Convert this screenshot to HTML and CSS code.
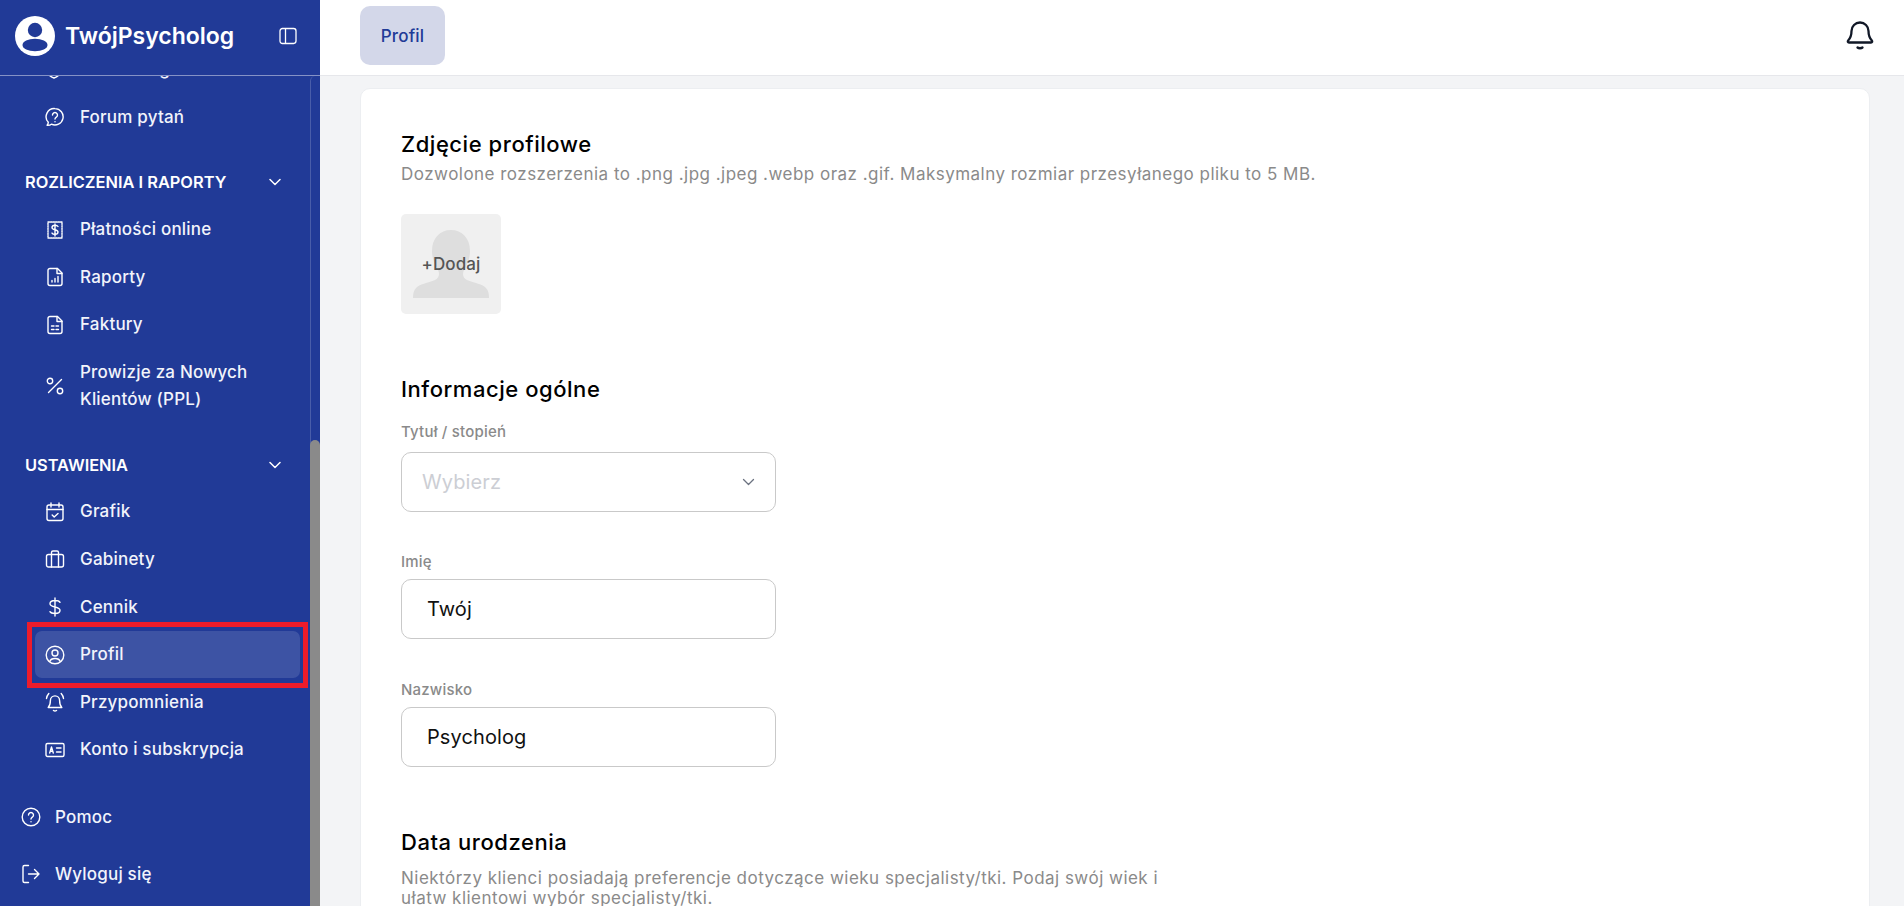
FILE: index.html
```html
<!DOCTYPE html>
<html lang="pl">
<head>
<meta charset="utf-8">
<title>TwójPsycholog – Profil</title>
<link rel="stylesheet" href="styles.css">
</head>
<body>
<div class="app">
  <aside class="sidebar">
    <div class="brand">
      <svg class="brand-logo" viewBox="0 0 40 40"><circle cx="20" cy="20" r="20" fill="#fff"/><circle cx="20" cy="14" r="7.2" fill="#213a97"/><ellipse cx="20" cy="29" rx="12.5" ry="6.2" fill="#213a97"/></svg>
      <span class="brand-name">TwójPsycholog</span>
      <svg class="brand-toggle" viewBox="0 0 18 18"><rect x="1" y="1.5" width="16" height="15" rx="2.4"/><path d="M6.5 1.5v15"/></svg>
    </div>
    <div class="sidebar-body">
      <div class="nav-scroll">
        <ul class="nav-list nav-list-top">
          <li class="nav-item"><svg class="ico" viewBox="0 0 20 20"><path d="M9 1l7 3v6c0 4-3 6.500-7 8-4-1.500-7-4-7-8V4z"/></svg><span>Monitoring</span></li>
          <li class="nav-item"><svg class="ico" viewBox="0 0 20 20"><path d="M10 1.600a8.200 8.200 0 1 1-3.600 15.600c-1 .9-2.600 1.200-4.300 1.100.8-.9 1.200-1.900 1.200-3A8.200 8.200 0 0 1 10 1.600z"/><path d="M7.500 8a2.500 2.500 0 1 1 3.800 2.100c-.8.500-1.300 1-1.300 1.900"/><path d="M10 14.600v.1"/></svg><span>Forum pytań</span></li>
        </ul>
        <div class="nav-section"><span>ROZLICZENIA I RAPORTY</span><svg class="chev" viewBox="0 0 12 8"><path d="M1 1.500l5 5 5-5"/></svg></div>
        <ul class="nav-list">
          <li class="nav-item"><svg class="ico" viewBox="0 0 20 20"><path d="M3 2h14v16H3z" stroke-dasharray="1.500 1"/><path d="M13 6.500c-.5-.8-1.500-1.200-3-1.200-1.700 0-3 .7-3 2.200 0 3 6 1.600 6 4.600 0 1.500-1.300 2.200-3 2.200-1.500 0-2.500-.4-3-1.200M10 4v12"/></svg><span>Płatności online</span></li>
          <li class="nav-item"><svg class="ico" viewBox="0 0 20 20"><path d="M12.500 1.500H5a2 2 0 0 0-2 2v13a2 2 0 0 0 2 2h10a2 2 0 0 0 2-2V6z"/><path d="M12 1.500V6.500h5M7 15v-1.500M10 15v-3.500M13 15V9.500"/></svg><span>Raporty</span></li>
          <li class="nav-item"><svg class="ico" viewBox="0 0 20 20"><path d="M12.500 1.500H5a2 2 0 0 0-2 2v13a2 2 0 0 0 2 2h10a2 2 0 0 0 2-2V6z"/><path d="M12 1.500V6.500h5M6.500 11h2.500M11 11h2.500M6.500 14.500h2.500M11 14.500h2.500"/></svg><span>Faktury</span></li>
          <li class="nav-item nav-item-tall"><svg class="ico" viewBox="0 0 20 20"><path d="M16.500 3.500l-13 13"/><circle cx="5" cy="5" r="2.700"/><circle cx="15" cy="15" r="2.700"/></svg><span>Prowizje za Nowych Klientów (PPL)</span></li>
        </ul>
        <div class="nav-section nav-section-second"><span>USTAWIENIA</span><svg class="chev" viewBox="0 0 12 8"><path d="M1 1.500l5 5 5-5"/></svg></div>
        <ul class="nav-list">
          <li class="nav-item"><svg class="ico" viewBox="0 0 20 20"><rect x="2" y="3" width="16" height="15.500" rx="2"/><path d="M2 7.500h16M6 1v4M14 1v4M7.200 13l2 2 3.800-3.500"/></svg><span>Grafik</span></li>
          <li class="nav-item"><svg class="ico" viewBox="0 0 20 20"><rect x="1.500" y="5.500" width="17" height="12.500" rx="2"/><path d="M6.500 5.500V3.500a1.500 1.500 0 0 1 1.500-1.500h4a1.500 1.500 0 0 1 1.500 1.500v2M6.500 5.500V18M13.500 5.500V18"/></svg><span>Gabinety</span></li>
          <li class="nav-item"><svg class="ico" viewBox="0 0 20 20"><path d="M15 5.300C14.300 4 12.500 3.500 10 3.500c-3 0-5 1.100-5 3.200 0 4.300 10 2.300 10 6.600 0 2.100-2 3.200-5 3.200-2.500 0-4.300-.5-5-1.800M10 1v18"/></svg><span>Cennik</span></li>
          <li class="nav-item nav-item-active"><svg class="ico" viewBox="0 0 20 20"><circle cx="10" cy="10" r="8.800"/><circle cx="10" cy="8" r="3"/><path d="M4.700 16.500c.7-2 2.500-3 5.300-3s4.600 1 5.300 3"/></svg><span>Profil</span><i class="highlight"></i></li>
          <li class="nav-item"><svg class="ico" viewBox="0 0 20 20"><path d="M3.200 15.500c1.500-1.500 2.200-3 2.200-7a4.600 4.600 0 0 1 9.200 0c0 4 .7 5.500 2.200 7zM8.500 18.500c.8.600 2.200.6 3 0M1.500 6.500c.2-2 1-3.500 2.300-5M18.500 6.500c-.2-2-1-3.500-2.300-5"/></svg><span>Przypomnienia</span></li>
          <li class="nav-item"><svg class="ico" viewBox="0 0 20 20"><rect x="1" y="3.500" width="18" height="13" rx="1.500"/><path d="M4.700 13l1.800-6 1.800 6M5.300 11.300h2.400M11.500 8h4.500M11.500 12h4.500"/></svg><span>Konto i subskrypcja</span></li>
        </ul>
        <ul class="foot-list">
          <li class="foot-item"><svg class="ico" viewBox="0 0 20 20"><circle cx="10" cy="10" r="8.800"/><path d="M7.500 8a2.500 2.500 0 1 1 3.800 2.100c-.8.500-1.300 1-1.300 1.900"/><path d="M10 14.600v.1"/></svg><span>Pomoc</span></li>
          <li class="foot-item"><svg class="ico" viewBox="0 0 20 20"><path d="M7.500 1.500H3.500a1.500 1.500 0 0 0-1.500 1.500v14a1.500 1.500 0 0 0 1.500 1.500h4M7.500 10H18M13.500 5.500L18 10l-4.500 4.500"/></svg><span>Wyloguj się</span></li>
        </ul>
      </div>
      <div class="scrollbar"><div class="scrollbar-thumb"></div></div>
    </div>
  </aside>
  <div class="main">
    <header class="topbar">
      <a class="tab">Profil</a>
      <svg class="bell" viewBox="0 0 28 30"><path d="M2.200 19.500c2-2.200 3.300-4 3.300-9.500a8.500 8.500 0 0 1 17 0c0 5.500 1.300 7.300 3.300 9.500.8.900.4 2-.8 2H3c-1.200 0-1.600-1.100-.8-2z"/><path d="M11.500 26.500c1.200 1 3.800 1 5 0"/></svg>
    </header>
    <div class="content">
      <section class="card">
        <h2 class="card-title">Zdjęcie profilowe</h2>
        <p class="card-desc">Dozwolone rozszerzenia to .png .jpg .jpeg .webp oraz .gif. Maksymalny rozmiar przesyłanego pliku to 5 MB.</p>
        <div class="avatar">
          <svg class="avatar-shape" viewBox="0 0 76 68"><path d="M38 0c11 0 19 8 19 21 0 8-3 14-6 19-2 4-1 8 3 10 7 3 16 4 19 8 2 2 3 5 3 10H0c0-5 1-8 3-10 3-4 12-5 19-8 4-2 5-6 3-10-3-5-6-11-6-19C19 8 27 0 38 0z"/></svg>
          <span class="avatar-label">+Dodaj</span>
        </div>
        <h2 class="card-title card-title-info">Informacje ogólne</h2>
        <label class="field-label field-label-first">Tytuł / stopień</label>
        <div class="select"><span>Wybierz</span><svg class="select-chev" viewBox="0 0 12 8"><path d="M1 1.500l5 5 5-5"/></svg></div>
        <label class="field-label field-label-gap">Imię</label>
        <div class="input">Twój</div>
        <label class="field-label field-label-gap2">Nazwisko</label>
        <div class="input">Psycholog</div>
        <h2 class="card-title card-title-birth">Data urodzenia</h2>
        <p class="card-desc card-desc-narrow">Niektórzy klienci posiadają preferencje dotyczące wieku specjalisty/tki. Podaj swój wiek i ułatw klientowi wybór specjalisty/tki.</p>
      </section>
    </div>
  </div>
</div>
</body>
</html>
```
FILE: styles.css
```css
* { box-sizing: border-box; }
html, body { margin: 0; height: 100%; overflow: hidden; }
body { font-family: Inter, "Liberation Sans", sans-serif; background: #f3f4f6; color: #111; }
ul { list-style: none; margin: 0; padding: 0; }
h2, p { margin: 0; }

.app { display: flex; height: 906px; }

.sidebar { width: 320px; flex: none; background: #213a97; color: #fff; display: flex; flex-direction: column; }
.brand { height: 76px; flex: none; display: flex; align-items: center; padding: 0 23px 4px 15px; border-bottom: 1px solid rgba(255,255,255,.45); }
.brand-logo { width: 40px; height: 40px; flex: none; }
.brand-name { margin-left: 10px; font-size: 23px; font-weight: 600; flex: 1; white-space: nowrap; }
.brand-toggle { width: 18px; height: 18px; fill: none; stroke: #fff; stroke-width: 1.300; }

.sidebar-body { flex: 1; min-height: 0; display: flex; }
.nav-scroll { flex: 1; min-width: 0; overflow: hidden; padding-left: 25px; }
.scrollbar { width: 10px; flex: none; display: flex; flex-direction: column; justify-content: flex-end; border-left: 1px solid rgba(255,255,255,.18); border-radius: 5px 0 0 0; }
.scrollbar-thumb { height: 466px; margin-left: -1px; background: #8a8a8a; border-radius: 5px 5px 0 0; }

.nav-list { padding: 0 10px 0 10px; }
.nav-list-top { margin-top: -30px; }
.nav-item { position: relative; display: flex; align-items: center; gap: 15px; height: 47.6px; padding: 0 10px; font-size: 17px; letter-spacing: .2px; line-height: 27px; font-weight: 500; border-radius: 7px; color: #f2f4fb; }
.nav-item-tall { height: 75px; }
.nav-item-active { background: rgba(255,255,255,.13); }
.highlight { position: absolute; left: -8px; right: -8px; top: -8.400px; bottom: -10px; border: 5px solid #ed1c2b; pointer-events: none; }
.ico { width: 20px; height: 20px; flex: none; fill: none; stroke: #fff; stroke-width: 1.400; stroke-linecap: round; stroke-linejoin: round; }

.nav-section { display: flex; align-items: center; justify-content: space-between; height: 40px; margin: 21px 10px 3.600px 0; font-size: 16.400px; font-weight: 600; color: #fff; }
.nav-section-second { margin-top: 21.400px; margin-bottom: 3.100px; }
.chev { width: 12px; height: 8px; margin-right: 19px; fill: none; stroke: #fff; stroke-width: 1.500; stroke-linecap: round; stroke-linejoin: round; }

.foot-list { margin: 14.600px 0 0 -4px; }
.foot-item { display: flex; align-items: center; gap: 14px; height: 57px; font-size: 17px; letter-spacing: .2px; font-weight: 500; color: #f2f4fb; }

.main { flex: 1; min-width: 0; display: flex; flex-direction: column; }
.topbar { height: 76px; flex: none; display: flex; align-items: flex-start; justify-content: space-between; padding: 6px 30px 0 40px; background: #fff; border-bottom: 1px solid #e6e7eb; }
.tab { width: 85px; height: 59px; display: flex; align-items: center; justify-content: center; background: #d3d7e9; border-radius: 10px; color: #213a97; font-size: 17px; letter-spacing: .2px; font-weight: 500; }
.bell { width: 28px; height: 30px; margin-top: 15px; fill: none; stroke: #111827; stroke-width: 2.300; stroke-linecap: round; stroke-linejoin: round; }

.content { flex: 1; min-height: 0; overflow: hidden; padding: 12px 34px 0 40px; }
.card { height: 900px; background: #fff; border: 1px solid #eceef1; border-radius: 10px; padding: 40px; }
.card-title { font-size: 22px; letter-spacing: .55px; line-height: 30px; font-weight: 450; color: #000; }
.card-desc { font-size: 17px; letter-spacing: .48px; line-height: 24px; color: #8a8a8a; margin-top: 3px; }
.card-desc-narrow { max-width: 770px; line-height: 20px; margin-top: 11px; }
.avatar { position: relative; width: 100px; height: 100px; margin-top: 28px; display: flex; align-items: center; justify-content: center; background: #f0f0f0; border-radius: 5px; }
.avatar-shape { position: absolute; left: 12px; top: 16px; width: 76px; height: 68px; fill: #dedede; }
.avatar-label { position: relative; font-size: 17px; letter-spacing: .1px; font-weight: 500; color: #555; }
.card-title-info { margin-top: 60px; }
.field-label { display: block; font-size: 15px; letter-spacing: .2px; line-height: 20px; font-weight: 500; color: #8a8a8a; }
.field-label-first { margin-top: 18px; }
.field-label-gap { margin-top: 40px; }
.field-label-gap2 { margin-top: 41px; }
.select, .input { width: 375px; height: 60px; margin-top: 7px; display: flex; align-items: center; background: #fff; border: 1px solid #c9c9c9; border-radius: 10px; font-size: 20px; letter-spacing: .1px; }
.select { margin-top: 10px; justify-content: space-between; padding: 0 20px; color: #ccced4; }
.select-chev { width: 13px; height: 8px; fill: none; stroke: #6b7280; stroke-width: 1.300; stroke-linecap: round; stroke-linejoin: round; }
.input { padding: 0 25px; color: #111; }
.card-title-birth { margin-top: 60px; }
```
